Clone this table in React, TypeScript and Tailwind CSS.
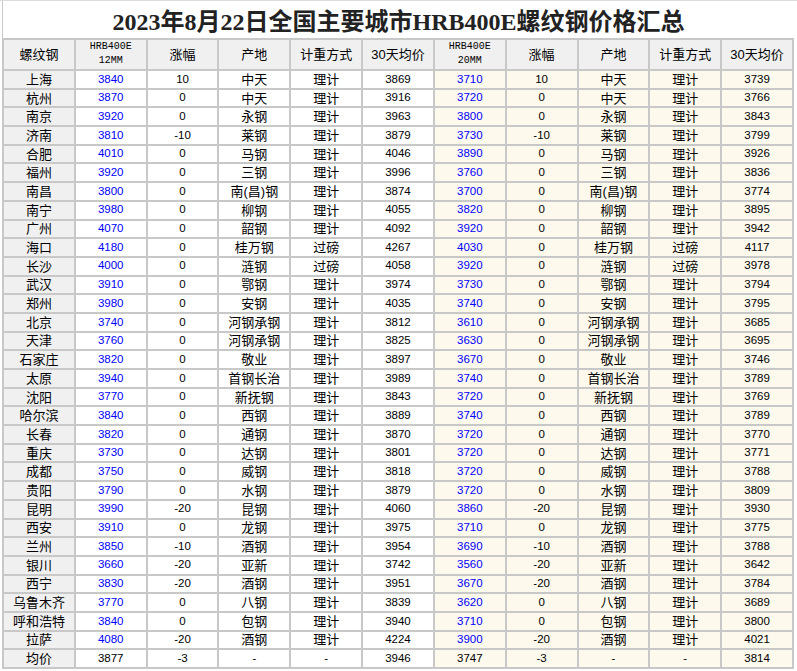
type Row = [string, string, string, string, string, string, string, string, string, string, string];

// 城市, 12MM价格, 涨幅, 产地, 计重方式, 30天均价, 20MM价格, 涨幅, 产地, 计重方式, 30天均价
const rows: Row[] = [
  ['上海', '3840', '10', '中天', '理计', '3869', '3710', '10', '中天', '理计', '3739'],
  ['杭州', '3870', '0', '中天', '理计', '3916', '3720', '0', '中天', '理计', '3766'],
  ['南京', '3920', '0', '永钢', '理计', '3963', '3800', '0', '永钢', '理计', '3843'],
  ['济南', '3810', '-10', '莱钢', '理计', '3879', '3730', '-10', '莱钢', '理计', '3799'],
  ['合肥', '4010', '0', '马钢', '理计', '4046', '3890', '0', '马钢', '理计', '3926'],
  ['福州', '3920', '0', '三钢', '理计', '3996', '3760', '0', '三钢', '理计', '3836'],
  ['南昌', '3800', '0', '南(昌)钢', '理计', '3874', '3700', '0', '南(昌)钢', '理计', '3774'],
  ['南宁', '3980', '0', '柳钢', '理计', '4055', '3820', '0', '柳钢', '理计', '3895'],
  ['广州', '4070', '0', '韶钢', '理计', '4092', '3920', '0', '韶钢', '理计', '3942'],
  ['海口', '4180', '0', '桂万钢', '过磅', '4267', '4030', '0', '桂万钢', '过磅', '4117'],
  ['长沙', '4000', '0', '涟钢', '过磅', '4058', '3920', '0', '涟钢', '过磅', '3978'],
  ['武汉', '3910', '0', '鄂钢', '理计', '3974', '3730', '0', '鄂钢', '理计', '3794'],
  ['郑州', '3980', '0', '安钢', '理计', '4035', '3740', '0', '安钢', '理计', '3795'],
  ['北京', '3740', '0', '河钢承钢', '理计', '3812', '3610', '0', '河钢承钢', '理计', '3685'],
  ['天津', '3760', '0', '河钢承钢', '理计', '3825', '3630', '0', '河钢承钢', '理计', '3695'],
  ['石家庄', '3820', '0', '敬业', '理计', '3897', '3670', '0', '敬业', '理计', '3746'],
  ['太原', '3940', '0', '首钢长治', '理计', '3989', '3740', '0', '首钢长治', '理计', '3789'],
  ['沈阳', '3770', '0', '新抚钢', '理计', '3843', '3720', '0', '新抚钢', '理计', '3769'],
  ['哈尔滨', '3840', '0', '西钢', '理计', '3889', '3740', '0', '西钢', '理计', '3789'],
  ['长春', '3820', '0', '通钢', '理计', '3870', '3720', '0', '通钢', '理计', '3770'],
  ['重庆', '3730', '0', '达钢', '理计', '3801', '3720', '0', '达钢', '理计', '3771'],
  ['成都', '3750', '0', '威钢', '理计', '3818', '3720', '0', '威钢', '理计', '3788'],
  ['贵阳', '3790', '0', '水钢', '理计', '3879', '3720', '0', '水钢', '理计', '3809'],
  ['昆明', '3990', '-20', '昆钢', '理计', '4060', '3860', '-20', '昆钢', '理计', '3930'],
  ['西安', '3910', '0', '龙钢', '理计', '3975', '3710', '0', '龙钢', '理计', '3775'],
  ['兰州', '3850', '-10', '酒钢', '理计', '3954', '3690', '-10', '酒钢', '理计', '3788'],
  ['银川', '3660', '-20', '亚新', '理计', '3742', '3560', '-20', '亚新', '理计', '3642'],
  ['西宁', '3830', '-20', '酒钢', '理计', '3951', '3670', '-20', '酒钢', '理计', '3784'],
  ['乌鲁木齐', '3770', '0', '八钢', '理计', '3839', '3620', '0', '八钢', '理计', '3689'],
  ['呼和浩特', '3840', '0', '包钢', '理计', '3940', '3710', '0', '包钢', '理计', '3800'],
  ['拉萨', '4080', '-20', '酒钢', '理计', '4224', '3900', '-20', '酒钢', '理计', '4021'],
];

const avgRow: Row = ['均价', '3877', '-3', '-', '-', '3946', '3747', '-3', '-', '-', '3814'];

const cellFont = "font-['Liberation_Sans','Noto_Sans_CJK_SC',sans-serif]";

/** 单元格背景：第一列灰色，右半部分（20MM）米黄色 */
const cellBg = (col: number) => {
  if (col === 0) return 'bg-[#f0f0f0]';
  if (col >= 6) return 'bg-[#fdf9ec]';
  return 'bg-white';
};

const HeaderCell = ({ children }: { children: React.ReactNode }) => (
  <div className="bg-[#f0f0f0] flex items-center justify-center text-[13px] leading-none text-black">
    {children}
  </div>
);

const SizeHeader = ({ size }: { size: string }) => (
  <HeaderCell>
    <div className="font-['Liberation_Mono',monospace] text-[10px] leading-[14px] text-center -mt-[2px]">
      <div>HRB400E</div>
      <div>{size}</div>
    </div>
  </HeaderCell>
);

export default function App() {
  const renderRow = (row: Row, isAvg: boolean, key: string) =>
    row.map((value, col) => {
      // 价格列（12MM / 20MM）显示为蓝色，均价行除外
      const isPrice = !isAvg && (col === 1 || col === 6);
      return (
        <div
          key={`${key}-${col}`}
          className={`${cellBg(col)} flex items-center justify-center leading-none whitespace-nowrap ${
            /^[-\d]+$/.test(value) ? 'text-[11.5px]' : 'text-[13px]'
          } ${isPrice ? 'text-[#0000ff]' : 'text-black'}`}
        >
          {value}
        </div>
      );
    });

  return (
    <div className={`w-[797px] h-[671px] bg-white overflow-hidden ${cellFont}`}>
      <div className="h-px bg-[#dcdcdc]" />
      <div className="ml-[2px] w-[792px] h-[37px] border-l border-[#c8c8c8] flex items-center justify-center pt-[4px]">
        <h1 className="font-['Liberation_Serif','Noto_Sans_CJK_SC',serif] font-bold text-[24px] leading-none text-[#222]">
          2023年8月22日全国主要城市HRB400E螺纹钢价格汇总
        </h1>
      </div>
      <div className="ml-[2px] w-[792px] grid grid-cols-11 grid-rows-[29px_repeat(32,16.69px)] gap-[2px] p-[2px] bg-[#c8c8c8]">
        <HeaderCell>螺纹钢</HeaderCell>
        <SizeHeader size="12MM" />
        <HeaderCell>涨幅</HeaderCell>
        <HeaderCell>产地</HeaderCell>
        <HeaderCell>计重方式</HeaderCell>
        <HeaderCell>30天均价</HeaderCell>
        <SizeHeader size="20MM" />
        <HeaderCell>涨幅</HeaderCell>
        <HeaderCell>产地</HeaderCell>
        <HeaderCell>计重方式</HeaderCell>
        <HeaderCell>30天均价</HeaderCell>
        {rows.map((row) => renderRow(row, false, row[0]))}
        {renderRow(avgRow, true, 'avg')}
      </div>
    </div>
  );
}
